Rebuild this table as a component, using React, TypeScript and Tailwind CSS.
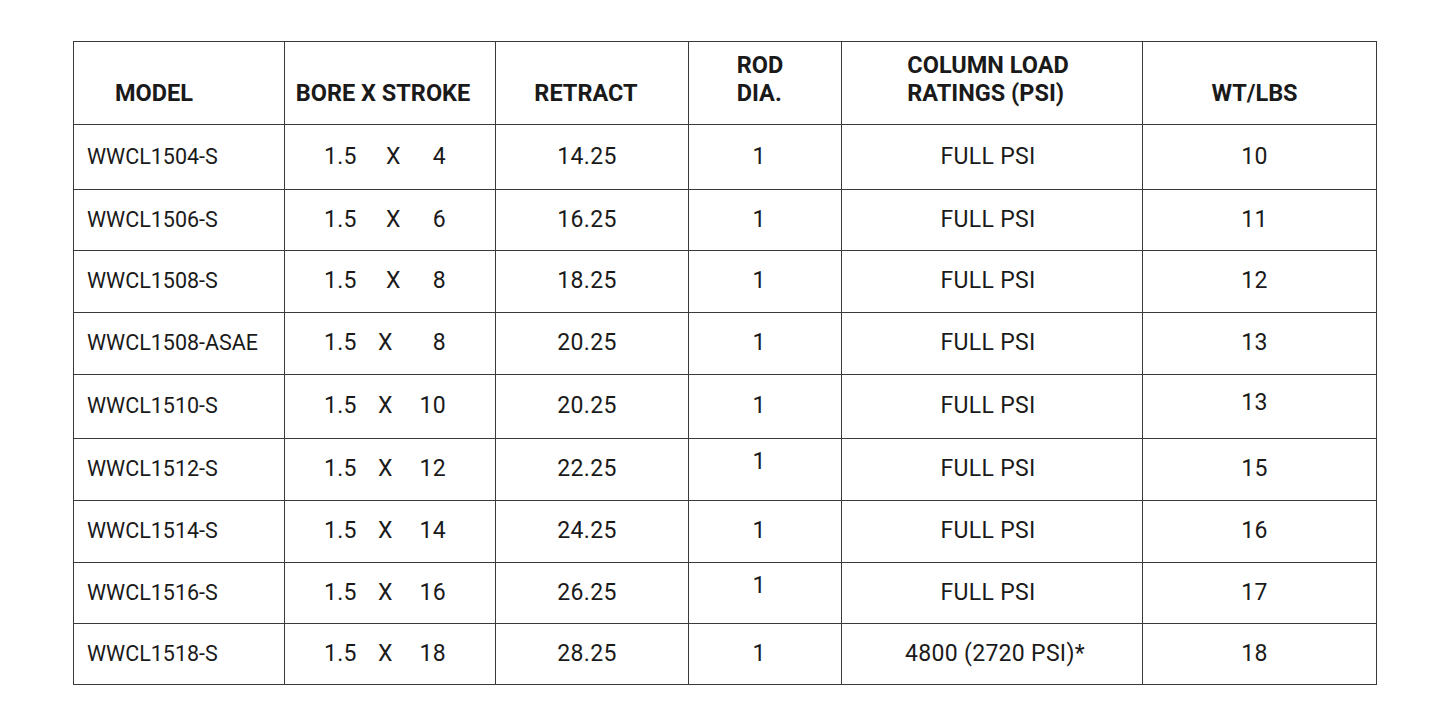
const rows = [
  { model: "WWCL1504-S", stroke: "4", xWide: true, retract: "14.25", rod: "1", load: "FULL PSI", wt: "10", h: "h-[65px]" },
  { model: "WWCL1506-S", stroke: "6", xWide: true, retract: "16.25", rod: "1", load: "FULL PSI", wt: "11", h: "h-[61px]" },
  { model: "WWCL1508-S", stroke: "8", xWide: true, retract: "18.25", rod: "1", load: "FULL PSI", wt: "12", h: "h-[62px]" },
  { model: "WWCL1508-ASAE", stroke: "8", xWide: false, retract: "20.25", rod: "1", load: "FULL PSI", wt: "13", h: "h-[62px]" },
  { model: "WWCL1510-S", stroke: "10", xWide: false, retract: "20.25", rod: "1", load: "FULL PSI", wt: "13", h: "h-[64px]", wtUp: true },
  { model: "WWCL1512-S", stroke: "12", xWide: false, retract: "22.25", rod: "1", load: "FULL PSI", wt: "15", h: "h-[62px]", rodUp: true },
  { model: "WWCL1514-S", stroke: "14", xWide: false, retract: "24.25", rod: "1", load: "FULL PSI", wt: "16", h: "h-[62px]" },
  { model: "WWCL1516-S", stroke: "16", xWide: false, retract: "26.25", rod: "1", load: "FULL PSI", wt: "17", h: "h-[61px]", rodUp: true },
  { model: "WWCL1518-S", stroke: "18", xWide: false, retract: "28.25", rod: "1", load: "4800 (2720 PSI)*", wt: "18", h: "h-[61px]", loadShift: true },
]

const cell = "border border-[#3a3a3a] p-0"
const head = `${cell} align-bottom pb-[17px]`
const body = `${cell} align-middle text-[23px] tracking-[0.3px]`

export default function App() {
  return (
    <div className="min-h-screen bg-white pt-[41px] pl-[73px] font-['Roboto',sans-serif] text-[21.5px] text-[#1a1a1a]">
      <table className="table-fixed border-collapse w-[1303px]">
        <colgroup>
          <col className="w-[211px]" />
          <col className="w-[211px]" />
          <col className="w-[193px]" />
          <col className="w-[153px]" />
          <col className="w-[301px]" />
          <col className="w-[234px]" />
        </colgroup>
        <thead>
          <tr className="font-bold text-[23.5px] leading-[28px]">
            <th className={`${head} h-[83px] text-left pl-[41px]`}>MODEL</th>
            <th className={`${head} text-center pr-[14px]`}>BORE X STROKE</th>
            <th className={`${head} text-center pr-[12px]`}>RETRACT</th>
            <th className={`${head} text-center pr-[10px]`}>
              <span className="inline-block text-left">ROD<br />DIA.</span>
            </th>
            <th className={`${head} text-center pr-[8px]`}>
              <span className="inline-block text-left">COLUMN LOAD<br />RATINGS (PSI)</span>
            </th>
            <th className={`${head} text-center pr-[10px]`}>WT/LBS</th>
          </tr>
        </thead>
        <tbody>
          {rows.map((r) => (
            <tr key={r.model + r.retract}>
              <td className={`${cell} align-middle ${r.h} pl-[13px]`}>{r.model}</td>
              <td className={body}>
                <div className="flex w-[122px] ml-[39px]">
                  <span className="w-[54px]">1.5</span>
                  <span className={r.xWide ? "pl-[8px]" : ""}>X</span>
                  <span className="ml-auto">{r.stroke}</span>
                </div>
              </td>
              <td className={`${body} text-center pr-[10px]`}>{r.retract}</td>
              <td className={`${body} text-center pr-[12px] ${r.rodUp ? "pb-[14px]" : ""}`}>{r.rod}</td>
              <td className={`${body} text-center ${r.loadShift ? "pl-[6px]" : "pr-[8px]"}`}>{r.load}</td>
              <td className={`${body} text-center pr-[10px] ${r.wtUp ? "pb-[6px]" : ""}`}>{r.wt}</td>
            </tr>
          ))}
        </tbody>
      </table>
    </div>
  )
}
